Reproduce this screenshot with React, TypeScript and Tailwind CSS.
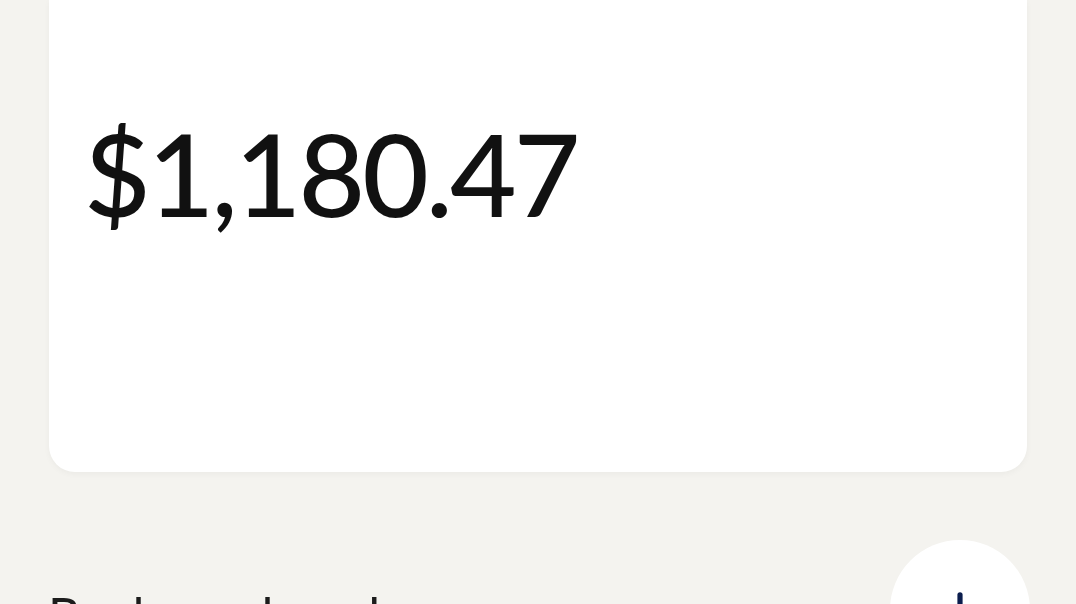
import { Plus } from "lucide-react"

export default function App() {
  return (
    <div
      className="h-[604px] w-[1076px] overflow-hidden bg-[#f4f3ef]"
      style={{ fontFamily: "Lato, 'Open Sans', sans-serif" }}
    >
      <div className="px-[49px]">
        <div className="h-[472px] rounded-b-[26px] bg-white pl-[35px] pt-[115px] shadow-[0_2px_6px_rgba(0,0,0,0.04)]">
          <div className="text-[115px] font-medium leading-none tracking-[-3px] text-[#111111]">
            $1,180.47
          </div>
        </div>
      </div>

      <div className="mt-[68px] flex items-start justify-between pl-[48px] pr-[46px]">
        <div className="pt-[50px] text-[50px] leading-none text-[#1c1c1c]">Banks and cards</div>
        <div className="flex h-[140px] w-[140px] items-center justify-center rounded-full bg-white">
          <Plus className="h-[52px] w-[52px] text-[#0b1d4d]" strokeWidth={2.4} />
        </div>
      </div>
    </div>
  )
}
